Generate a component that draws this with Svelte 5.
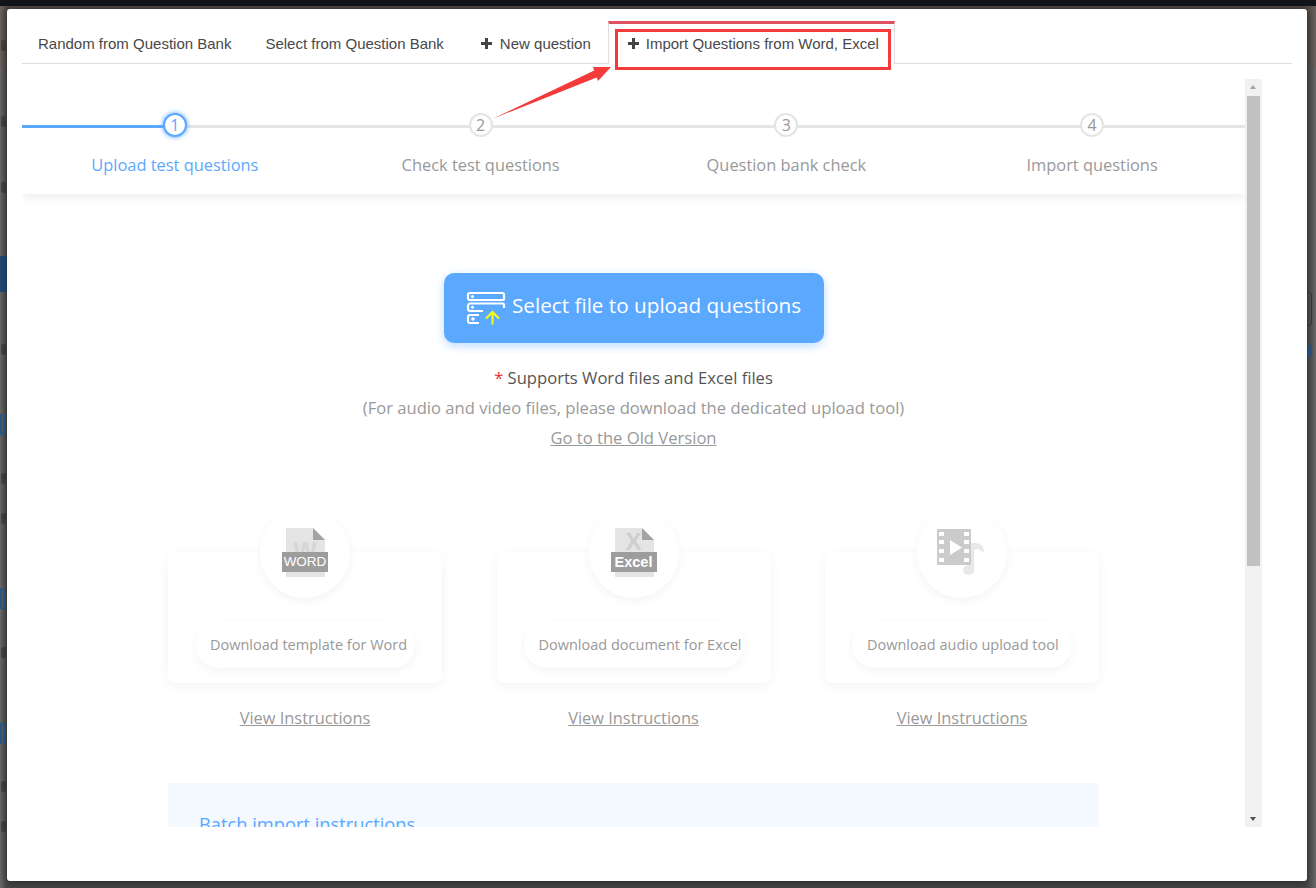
<script>
  //Tabs along the top of the dialog
  const tabs = [
    { label: "Random from Question Bank" },
    { label: "Select from Question Bank" },
    { label: "New question", plus: true },
    { label: "Import Questions from Word, Excel", plus: true, active: true }
  ];

  //Steps of the import wizard
  const steps = ["Upload test questions", "Check test questions", "Question bank check", "Import questions"];

  //Download cards
  const cards = [
    { kind: "word", label: "Download template for Word" },
    { kind: "excel", label: "Download document for Excel" },
    { kind: "audio", label: "Download audio upload tool" }
  ];

  //Smudges of the page behind the dialog that peek out on the left edge
  const smudges = [40, 116, 182, 344, 473, 513, 647, 781, 821];
  const brackets = [414, 588, 723];
</script>

<div class="backdrop">
  <div class="topbar"></div>

  <!-- Page behind the dialog, only the edges show -->
  <div class="band"></div>
  <div class="blue-block"></div>
  {#each smudges as y}
    <span class="smudge" style="top: {y}px"></span>
  {/each}
  {#each brackets as y}
    <span class="behind-bracket" style="top: {y}px"></span>
  {/each}
  <div class="right-box"></div>
  <div class="right-link"></div>

  <div class="modal">
    <!-- Tab row -->
    <div class="tabs">
      {#each tabs as tab}
        <div class={tab.active ? "tab tab-active" : "tab"}>
          {#if tab.plus}<span class="plus"></span>{/if}
          {tab.label}
        </div>
      {/each}
    </div>

    <!-- Scrolling body -->
    <div class="body">
      <div class="content">
        <div class="steps">
          {#each steps as step, index}
            <div class={index == 0 ? "step step-on" : "step"}>
              <div class="track">
                <span class="dot">{index + 1}</span>
              </div>
              <div class="step-label">{step}</div>
            </div>
          {/each}
        </div>

        <div class="upload">
          <div class="upload-btn">
            <svg width="40" height="34" viewBox="0 0 40 34" fill="none">
              <g stroke="#fff" stroke-width="2.200">
                <rect x="2" y="2" width="36" height="7" rx="1.500" />
                <path d="M17 20H4.500A2.500 2.500 0 0 1 2 17.500V15A2.500 2.500 0 0 1 4.500 12.500H36.500A1.500 1.500 0 0 1 38 14V17" />
                <path d="M13 32H4a2 2 0 0 1-2-2V26a2 2 0 0 1 2-2H13" />
              </g>
              <g fill="#fff">
                <circle cx="6.500" cy="5.500" r="1.500" />
                <circle cx="6.500" cy="16.300" r="1.500" />
                <circle cx="7" cy="28" r="1.800" />
              </g>
              <path d="M26.500 33.500V21M20 27.500l6.500-6.500 6.500 6.500" stroke="#f4fb1c" stroke-width="2.200" />
            </svg>
            <span class="upload-text">Select file to upload questions</span>
          </div>
          <div class="note note-dark"><span class="star">*</span> Supports Word files and Excel files</div>
          <div class="note">(For audio and video files, please download the dedicated upload tool)</div>
          <div class="note"><u>Go to the Old Version</u></div>
        </div>

        <div class="cards">
          {#each cards as card}
            <div class="card-col">
              <div class="card">
                <div class="circle">
                  {#if card.kind == "audio"}
                    <svg width="56" height="52" viewBox="0 0 56 52">
                      <g fill="#e8e8e8">
                        <rect x="37" y="16" width="3" height="28" />
                        <path d="M40 16C45 16 50 18 50 24C50 26 49 25 47 24C45 22 42 22 40 23Z" />
                        <ellipse cx="34.500" cy="43" rx="5.500" ry="5" />
                      </g>
                      <path fill="#cbcbcb" fill-rule="evenodd" d="M3 2h34v36H3zM5 5v4h5V5zM5 13v4h5v-4zM5 22v4h5v-4zM5 31v4h5v-4zM30 5v4h5V5zM30 13v4h5v-4zM30 22v4h5v-4zM30 31v4h5v-4zM16 13v15l12-7.500z" />
                    </svg>
                  {:else}
                    <svg width="48" height="50" viewBox="0 0 48 50">
                      <path fill="#e4e4e4" d="M5 0H32L44 12V49H5Z" />
                      <path fill="#a3a3a3" d="M32 0L44 12H32Z" />
                      <rect x="1" y="24" width="46" height="20" fill="#9d9d9d" />
                    </svg>
                    <span class={card.kind == "word" ? "big-letter word" : "big-letter excel"}>{card.kind == "word" ? "W" : "X"}</span>
                    <span class={card.kind == "word" ? "file-tag" : "file-tag file-tag-bold"}>{card.kind == "word" ? "WORD" : "Excel"}</span>
                  {/if}
                </div>
                <div class="pill">{card.label}</div>
              </div>
              <div class="view"><u>View Instructions</u></div>
            </div>
          {/each}
        </div>

        <div class="batch">
          <div class="batch-title">Batch import instructions</div>
        </div>
      </div>

      <!-- Custom scrollbar -->
      <div class="scrollbar">
        <div class="arrow-up"></div>
        <div class="thumb"></div>
        <div class="arrow-down"></div>
      </div>
    </div>

    <!-- Hand drawn annotation over the screenshot -->
    <div class="mark-box"></div>
    <svg class="mark-arrow" width="130" height="60" viewBox="0 0 130 60">
      <path fill="#f33b3b" d="M1 56L103.200 7.500L102 4L120 4L107 18L105.700 14.500Z" />
    </svg>
  </div>
</div>

<style>
  :global(body) {
    margin: 0;
    background: #565656;
  }

  .backdrop {
    height: 888px;
    overflow: hidden;
    background: linear-gradient(90deg, #686868 0, #464646 7px, #464646 1307px, #686868 1316px);
    font-family: "Open Sans", "Noto Sans", sans-serif;
    position: relative;
  }

  .topbar {
    height: 6px;
    background: #11141a;
    margin-bottom: 3px;
  }

  .band {
    position: absolute;
    left: 0;
    top: 6px;
    width: 100%;
    height: 62px;
    background: rgba(110, 70, 50, 0.18);
  }

  .blue-block {
    position: absolute;
    left: 0;
    top: 256px;
    width: 7px;
    height: 36px;
    background: #204a75;
  }

  .smudge {
    position: absolute;
    left: 1px;
    width: 5px;
    height: 11px;
    border-radius: 2px;
    background: #333;
    opacity: 0.6;
  }

  .behind-bracket {
    position: absolute;
    left: 0;
    width: 5px;
    height: 21px;
    border: 1px solid #2a5a8a;
    border-left-width: 2px;
    box-sizing: border-box;
  }

  .right-box {
    position: absolute;
    left: 1300px;
    top: 292px;
    width: 12px;
    height: 34px;
    border: 1px solid #3a3a3a;
    border-radius: 3px;
    box-sizing: border-box;
  }

  .right-link {
    position: absolute;
    left: 1307px;
    top: 345px;
    width: 5px;
    height: 12px;
    background: #2f5580;
  }

  .modal {
    position: relative;
    margin-left: 7px;
    width: 1300px;
    height: 872px;
    background: #fff;
    border-radius: 3px;
    box-shadow: 0 2px 8px rgba(0, 0, 0, 0.4);
    padding: 12px 15px 0;
    box-sizing: border-box;
  }

  .tabs {
    display: flex;
    height: 42px;
    width: 1270px;
    border-bottom: 1px solid #ddd;
    box-sizing: content-box;
    font-family: "Liberation Sans", Arial, sans-serif;
    font-size: 15px;
    color: #484848;
  }

  .tab {
    padding: 2px 17px 0;
    white-space: nowrap;
    display: flex;
    align-items: center;
    gap: 8px;
    height: 42px;
    box-sizing: border-box;
  }

  .tab:first-child {
    padding-left: 16px;
  }

  .tab:nth-child(3) {
    padding: 2px 16px 0 20px;
  }

  .tab-active {
    height: 43px;
    background: #fff;
    border: 1px solid #ddd;
    border-top: 3px solid #e0525f;
    border-bottom: none;
    margin-left: 1px;
    padding: 0 15px 2px 19px;
    gap: 7px;
  }

  .plus {
    display: inline-block;
    width: 11px;
    height: 11px;
    background:
      linear-gradient(#444, #444) center / 11px 3px no-repeat,
      linear-gradient(#444, #444) center / 3px 11px no-repeat;
  }

  .body {
    display: flex;
    margin-top: 15px;
    height: 748px;
    overflow: hidden;
    width: 1240px;
  }

  .content {
    width: 1223px;
    flex: none;
    overflow: hidden;
  }

  .steps {
    display: grid;
    grid-template-columns: repeat(4, 1fr);
    height: 115px;
    box-shadow: 0 4px 10px rgba(0, 0, 0, 0.07);
  }

  .step {
    color: #999;
    text-align: center;
  }

  .track {
    height: 3px;
    margin-top: 46px;
    background: #e5e5e5;
    position: relative;
  }

  .step-on .track {
    background: linear-gradient(90deg, #5ba8ff 50%, #e5e5e5 50%);
  }

  .dot {
    position: absolute;
    left: 50%;
    top: -12px;
    margin-left: -12px;
    width: 24px;
    height: 24px;
    box-sizing: border-box;
    border: 2px solid #e4e4e4;
    border-radius: 50%;
    background: #fff;
    font-size: 16px;
    line-height: 20px;
    color: #999;
  }

  .step-on .dot {
    border-color: #5ba8ff;
    color: #5ba8ff;
    box-shadow: 0 0 5px #5ba8ff;
  }

  .step-label {
    margin-top: 26px;
    font-size: 16.400px;
    line-height: 22px;
  }

  .step-on .step-label {
    color: #5ba8ff;
  }

  .upload {
    margin-top: 79px;
    text-align: center;
    height: 210px;
  }

  .upload-btn {
    width: 380px;
    height: 70px;
    margin: 0 auto 20px;
    border-radius: 10px;
    background: #5ba8ff;
    box-shadow: 0 3px 10px rgba(91, 168, 255, 0.4);
    color: #fff;
    font-size: 20.700px;
    display: flex;
    align-items: center;
    justify-content: center;
    gap: 6px;
  }

  .upload-text {
    margin-bottom: 6px;
  }

  .note {
    font-size: 16.600px;
    line-height: 30px;
    color: #999;
  }

  .note-dark {
    color: #555;
  }

  .star {
    color: #e33;
  }

  .cards {
    margin: 25px 0 0 146px;
    width: 931px;
    display: flex;
    justify-content: space-between;
  }

  .card-col {
    width: 274px;
    text-align: center;
  }

  .card {
    position: relative;
    margin-top: 44px;
    height: 131px;
    border-radius: 8px;
    box-shadow: 0 3px 12px rgba(0, 0, 0, 0.05);
    background: #fff;
    display: flex;
    flex-direction: column;
    align-items: center;
    justify-content: flex-end;
    padding-bottom: 15px;
    box-sizing: border-box;
  }

  .circle {
    position: absolute;
    top: -44px;
    left: 92px;
    width: 90px;
    height: 90px;
    border-radius: 50%;
    background: #fff;
    box-shadow: 0 3px 10px rgba(0, 0, 0, 0.05);
    display: flex;
    align-items: center;
    justify-content: center;
  }

  .big-letter {
    position: absolute;
    left: 0;
    width: 100%;
    text-align: center;
    overflow: hidden;
    font-family: "Liberation Sans", Arial, sans-serif;
    font-weight: bold;
    line-height: 18px;
  }

  .big-letter.word {
    top: 34px;
    height: 10px;
    font-size: 25px;
    color: #d6d6d6;
  }

  .big-letter.excel {
    top: 25px;
    height: 18px;
    font-size: 24px;
    color: #cecece;
  }

  .file-tag {
    position: absolute;
    top: 44px;
    left: 0;
    width: 100%;
    text-align: center;
    font-family: "Liberation Sans", Arial, sans-serif;
    font-size: 13.500px;
    color: #fff;
    line-height: 20px;
  }

  .file-tag-bold {
    font-weight: bold;
    font-size: 14.500px;
  }

  .pill {
    width: 220px;
    padding-left: 15px;
    box-sizing: border-box;
    text-align: left;
    height: 46px;
    line-height: 46px;
    border-radius: 23px;
    background: #fff;
    box-shadow: 0 3px 10px rgba(0, 0, 0, 0.05);
    font-size: 14.500px;
    color: #999;
    white-space: nowrap;
  }

  .view {
    margin-top: 24px;
    font-size: 16.400px;
    line-height: 22px;
    color: #999;
  }

  .batch {
    margin: 54px 0 0 146px;
    width: 931px;
    height: 120px;
    background: #f4f8ff;
    box-sizing: border-box;
    padding: 28px 31px;
  }

  .batch-title {
    font-size: 18.300px;
    color: #5ba8ff;
  }

  .scrollbar {
    width: 17px;
    flex: none;
    background: #f1f1f1;
    position: relative;
  }

  .thumb {
    position: absolute;
    top: 17px;
    left: 2px;
    width: 13px;
    height: 470px;
    background: #c1c1c1;
  }

  .arrow-up,
  .arrow-down {
    position: absolute;
    left: 5px;
    width: 0;
    height: 0;
    border-left: 3.500px solid transparent;
    border-right: 3.500px solid transparent;
  }

  .arrow-up {
    top: 6px;
    border-bottom: 4px solid #a3a3a3;
  }

  .arrow-down {
    bottom: 6px;
    border-top: 4px solid #505050;
  }

  .mark-box {
    position: absolute;
    left: 608px;
    top: 20px;
    width: 276px;
    height: 41px;
    box-sizing: border-box;
    border: 3px solid #f33b3b;
  }

  .mark-arrow {
    position: absolute;
    left: 484px;
    top: 54px;
  }
</style>
